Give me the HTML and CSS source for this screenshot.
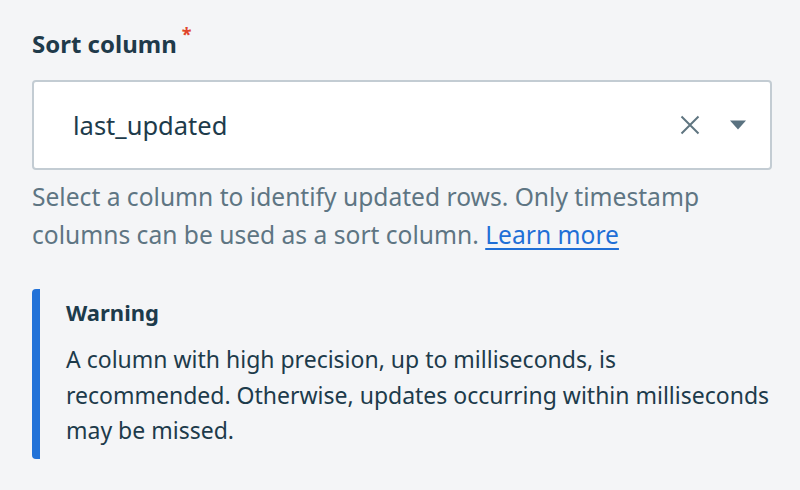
FILE: index.html
```html
<!DOCTYPE html>
<html lang="en">
<head>
<meta charset="utf-8">
<title>Sort column</title>
<link rel="stylesheet" href="styles.css">
</head>
<body>
<div class="field">
  <label class="label">Sort column<span class="req">*</span></label>
  <div class="select">
    <span class="value">last_updated</span>
    <span class="actions">
      <svg class="icon-x" width="20" height="20" viewBox="0 0 20 20" aria-hidden="true"><path d="M1.5 1.5 L18.5 18.5 M18.5 1.5 L1.5 18.5" stroke="#5f7580" stroke-width="2" fill="none"/></svg>
      <svg class="icon-caret" width="16" height="10" viewBox="0 0 16 10" aria-hidden="true"><path d="M0 0.5 H16 L8 9.5 Z" fill="#5a7280"/></svg>
    </span>
  </div>
  <p class="help">Select a column to identify updated rows. Only timestamp columns can be used as a sort column. <a href="#" class="link">Learn more</a></p>
  <div class="callout">
    <div class="callout-title">Warning</div>
    <p class="callout-body">A column with high precision, up to milliseconds, is recommended. Otherwise, updates occurring within milliseconds may be missed.</p>
  </div>
</div>
</body>
</html>
```

FILE: styles.css
```css
html, body {
  margin: 0;
  padding: 0;
  background: #f4f5f7;
}
body {
  font-family: "Noto Sans", Lato, sans-serif;
  color: #1d3b4b;
}
.field {
  padding: 26px 28px 0 32px;
  display: flex;
  flex-direction: column;
}
.label {
  font-size: 24px;
  font-weight: 700;
  line-height: 36px;
  color: #1f3a4a;
}
.req {
  color: #e0452b;
  font-size: 18px;
  vertical-align: top;
  line-height: 20px;
  margin-left: 5px;
  position: relative;
  top: -2px;
}
.select {
  margin-top: 18px;
  height: 90px;
  box-sizing: border-box;
  border: 2px solid #c3ccd3;
  border-radius: 4px;
  background: #fff;
  display: flex;
  align-items: center;
  padding: 0 24px 0 39px;
}
.value {
  flex: 1;
  font-size: 25.5px;
  color: #1d3b4b;
}
.actions {
  display: flex;
  align-items: center;
  gap: 30px;
}
.icon-x { display: block; }
.icon-caret { display: block; }
.help {
  margin: 8px 0 0;
  font-size: 24.6px;
  line-height: 37.5px;
  color: #5e7583;
}
.link {
  color: #1f6fd6;
  text-decoration: underline;
  text-underline-offset: 4px;
}
.callout {
  margin-top: 36px;
  border-left: 8px solid #2272d8;
  border-radius: 4px;
  padding: 5px 0 10px 26px;
}
.callout-title {
  font-size: 22px;
  font-weight: 700;
  line-height: 36px;
}
.callout-body {
  margin: 12px 0 0;
  font-size: 23px;
  line-height: 35.5px;
}
```
